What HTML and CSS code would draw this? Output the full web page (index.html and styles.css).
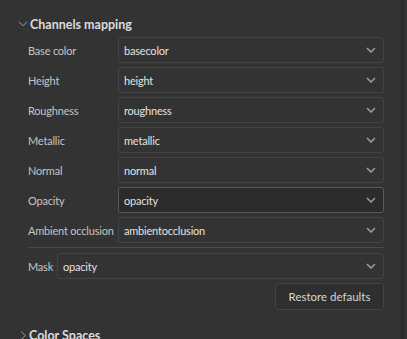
FILE: index.html
```html
<!DOCTYPE html>
<html>
<head>
<meta charset="utf-8">
<link rel="stylesheet" href="styles.css">
</head>
<body>
<div class="shell">
  <div class="panel">
    <div class="section-head">
      <svg class="caret" width="9" height="6" viewBox="0 0 9 6"><path d="M0.5 0.8 L4.5 4.8 L8.5 0.8" fill="none" stroke="#a0a0a0" stroke-width="1"/></svg>
      <span>Channels mapping</span>
    </div>
    <div class="grid">
      <div class="label">Base color</div>
      <div class="select"><span>basecolor</span><svg class="chev" width="10" height="6" viewBox="0 0 10 6"><path d="M1 1 L5 5 L9 1" fill="none" stroke="#9a9a9a" stroke-width="1.6"/></svg></div>
      <div class="label">Height</div>
      <div class="select"><span>height</span><svg class="chev" width="10" height="6" viewBox="0 0 10 6"><path d="M1 1 L5 5 L9 1" fill="none" stroke="#9a9a9a" stroke-width="1.6"/></svg></div>
      <div class="label">Roughness</div>
      <div class="select"><span>roughness</span><svg class="chev" width="10" height="6" viewBox="0 0 10 6"><path d="M1 1 L5 5 L9 1" fill="none" stroke="#9a9a9a" stroke-width="1.6"/></svg></div>
      <div class="label">Metallic</div>
      <div class="select"><span>metallic</span><svg class="chev" width="10" height="6" viewBox="0 0 10 6"><path d="M1 1 L5 5 L9 1" fill="none" stroke="#9a9a9a" stroke-width="1.6"/></svg></div>
      <div class="label">Normal</div>
      <div class="select"><span>normal</span><svg class="chev" width="10" height="6" viewBox="0 0 10 6"><path d="M1 1 L5 5 L9 1" fill="none" stroke="#9a9a9a" stroke-width="1.6"/></svg></div>
      <div class="label">Opacity</div>
      <div class="select active"><span>opacity</span><svg class="chev" width="10" height="6" viewBox="0 0 10 6"><path d="M1 1 L5 5 L9 1" fill="none" stroke="#9a9a9a" stroke-width="1.6"/></svg></div>
      <div class="label">Ambient occlusion</div>
      <div class="select"><span>ambientocclusion</span><svg class="chev" width="10" height="6" viewBox="0 0 10 6"><path d="M1 1 L5 5 L9 1" fill="none" stroke="#9a9a9a" stroke-width="1.6"/></svg></div>
    </div>
    <div class="sep"></div>
    <div class="mask-row">
      <div class="label">Mask</div>
      <div class="select"><span>opacity</span><svg class="chev" width="10" height="6" viewBox="0 0 10 6"><path d="M1 1 L5 5 L9 1" fill="none" stroke="#9a9a9a" stroke-width="1.6"/></svg></div>
    </div>
    <div class="actions">
      <button class="btn">Restore defaults</button>
    </div>
    <div class="section-head closed">
      <svg class="caret" width="6" height="9" viewBox="0 0 6 9"><path d="M0.8 0.5 L4.8 4.5 L0.8 8.5" fill="none" stroke="#a0a0a0" stroke-width="1"/></svg>
      <span>Color Spaces</span>
    </div>
  </div>
  <div class="edge"></div>
</div>
</body>
</html>
```
FILE: styles.css
```css
html, body {
  margin: 0;
  padding: 0;
  background: #333333;
  height: 100%;
  overflow: hidden;
}
.shell {
  display: flex;
  height: 339px;
  font-family: "Lato", "Open Sans", sans-serif;
  font-size: 11px;
  letter-spacing: -0.2px;
  color: #c4c4c4;
}
.panel {
  width: 401px;
  box-sizing: border-box;
  padding: 12px 17px 0 28px;
}
.edge {
  width: 3px;
  background: #2a2a2a;
}
.section-head {
  display: flex;
  align-items: center;
  height: 24px;
  margin-left: -13px;
  margin-bottom: 1px;
  font-weight: 700;
  font-size: 12.5px;
  letter-spacing: 0;
  color: #dcdcdc;
}
.section-head .caret {
  width: 14px;
  margin-left: 1px;
}
.section-head.closed {
  margin-top: 13px;
}
.section-head.closed .caret {
  margin-left: 3px;
  width: 11px;
}
.grid {
  display: grid;
  grid-template-columns: 90px 1fr;
  grid-auto-rows: 26px;
  row-gap: 4px;
}
.label {
  display: flex;
  align-items: center;
  white-space: nowrap;
}
.select {
  display: flex;
  align-items: center;
  justify-content: space-between;
  box-sizing: border-box;
  height: 26px;
  padding: 0 6px 0 5px;
  border: 1px solid #434343;
  border-radius: 3px;
  background: #333333;
  color: #e2e2e2;
}
.select.active {
  background: #2b2b2b;
  border-color: #5a5a5a;
}
.chev {
  margin-right: 1px;
}
.sep {
  height: 1px;
  background: #4a4a4a;
  margin: 4px 0 5px;
}
.mask-row {
  display: grid;
  grid-template-columns: 29px 1fr;
  height: 26px;
}
.actions {
  display: flex;
  justify-content: flex-end;
  margin-top: 4px;
}
.btn {
  height: 27px;
  width: 109px;
  box-sizing: border-box;
  background: #2f2f2f;
  border: 1px solid #444444;
  border-radius: 3px;
  color: #d6d6d6;
  font-family: "Lato", "Open Sans", sans-serif;
  font-size: 11.5px;
  padding: 0;
}
```
